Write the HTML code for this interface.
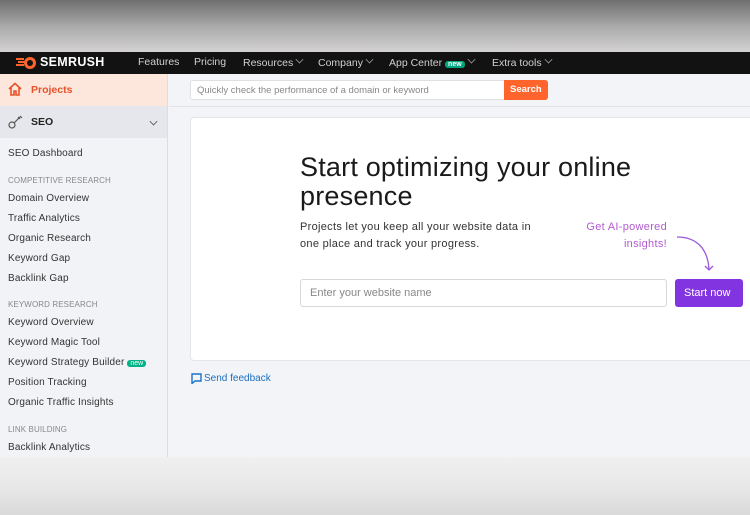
<!DOCTYPE html><html><head><style>
*{margin:0;padding:0;box-sizing:border-box}
body{width:750px;height:515px;overflow:hidden;font-family:"Liberation Sans",sans-serif;background:#f3f4f7;position:relative}
.top{position:absolute;left:0;top:0;width:750px;height:52px;background:linear-gradient(#6f6f70,#a9a9a9 50%,#d4d2d2)}
.nav{position:absolute;left:0;top:52px;width:750px;height:22px;background:#121212;color:#d0d0d0;font-size:10.5px}
.nav span{position:absolute;top:4px;white-space:nowrap}
.chev{display:inline-block;width:7px;height:7px;border-right:1px solid #999;border-bottom:1px solid #999;transform:rotate(45deg) scale(.8);margin:0 0 3px 3px}
.side{position:absolute;left:0;top:74px;width:168px;height:383px;background:#f2f3f6;border-right:1px solid #dcdde2}
.proj{height:32px;background:#fde6db;color:#e5522a;font-weight:bold;font-size:10.5px;padding:10px 0 0 31px;position:relative}
.seo{height:32px;background:#e5e7ec;font-weight:bold;font-size:10.5px;padding:10px 0 0 31px;color:#222;position:relative}
.it{position:absolute;left:8px;font-size:10px;color:#333;letter-spacing:.15px;white-space:nowrap}
.hd{position:absolute;left:8px;font-size:8px;color:#888;letter-spacing:.1px}
.bot{position:absolute;left:0;top:457px;width:750px;height:58px;background:linear-gradient(#f0f0f1,#e6e6e6 60%,#d9d9d9)}
.card{position:absolute;left:190px;top:117px;width:570px;height:244px;background:#fff;border:1px solid #e4e5ea;border-radius:4px}
</style></head><body>
<div class="top"></div>
<div class="nav">
<svg style="position:absolute;left:15px;top:4px" width="22" height="14" viewBox="0 0 22 14"><path d="M1 3h8M3 6h7M1 9h8" stroke="#ff642d" stroke-width="2"/><circle cx="15" cy="7" r="6" fill="#ff642d"/><circle cx="15" cy="7" r="3" fill="#121212"/></svg>
<span style="left:40px;top:3px;color:#fff;font-weight:bold;font-size:12.5px;letter-spacing:.3px">SEMRUSH</span>
<span style="left:138px">Features</span><span style="left:194px">Pricing</span><span style="left:243px">Resources<i class="chev"></i></span><span style="left:318px">Company<i class="chev"></i></span><span style="left:389px">App Center <b style="background:#00a67e;color:#fff;font-size:7px;padding:0 3px;border-radius:3px">new</b><i class="chev"></i></span><span style="left:492px">Extra tools<i class="chev"></i></span>
</div>
<div class="side">
<div class="proj"><svg style="position:absolute;left:8px;top:8px" width="14" height="14" viewBox="0 0 14 14"><path d="M1 7L7 1.5 13 7M3 5.5V13h3V9h2v4h3V5.5" fill="none" stroke="#e5522a" stroke-width="1.6"/></svg>Projects</div>
<div class="seo"><svg style="position:absolute;left:8px;top:9px" width="16" height="14" viewBox="0 0 16 14"><circle cx="4" cy="10" r="3" fill="none" stroke="#555" stroke-width="1.2"/><path d="M6 8l6-6M10 2l2 2M12 1l2 2" stroke="#555" stroke-width="1.2"/></svg>SEO<i class="chev" style="position:absolute;left:147px;top:12px;border-color:#555"></i></div>
<div class="it" style="top:74px">SEO Dashboard</div>
<div class="hd" style="top:102px">COMPETITIVE RESEARCH</div>
<div class="it" style="top:119px">Domain Overview</div>
<div class="it" style="top:139px">Traffic Analytics</div>
<div class="it" style="top:159px">Organic Research</div>
<div class="it" style="top:179px">Keyword Gap</div>
<div class="it" style="top:199px">Backlink Gap</div>
<div class="hd" style="top:226px">KEYWORD RESEARCH</div>
<div class="it" style="top:243px">Keyword Overview</div>
<div class="it" style="top:263px">Keyword Magic Tool</div>
<div class="it" style="top:283px">Keyword Strategy Builder <b style="background:#00b386;color:#fff;font-size:7px;padding:0 3px;border-radius:3px;font-weight:normal;letter-spacing:0">new</b></div>
<div class="it" style="top:303px">Position Tracking</div>
<div class="it" style="top:323px">Organic Traffic Insights</div>
<div class="hd" style="top:351px">LINK BUILDING</div>
<div class="it" style="top:368px">Backlink Analytics</div>
</div>
<div style="position:absolute;left:169px;top:106px;width:581px;height:1px;background:#e2e3e8"></div>
<div style="position:absolute;left:190px;top:80px;width:358px;height:20px;background:#fff;border:1px solid #e0e0e4;border-radius:3px;font-size:9.5px;color:#888;padding:4px 0 0 6px">Quickly check the performance of a domain or keyword</div>
<div style="position:absolute;left:504px;top:80px;width:44px;height:20px;background:#ff642d;border-radius:0 3px 3px 0;color:#fff;font-weight:bold;font-size:9.5px;padding:4px 0 0 6px">Search</div>
<div class="card"></div>
<div style="position:absolute;left:300px;top:153px;font-size:27px;line-height:29px;color:#1a1a1a;width:440px;letter-spacing:.2px">Start optimizing your online presence</div>
<div style="position:absolute;left:300px;top:219px;font-size:11px;line-height:16.5px;color:#333;width:240px;letter-spacing:.3px">Projects let you keep all your website data in one place and track your progress.</div>
<div style="position:absolute;left:550px;top:219px;width:117px;text-align:right;font-size:11px;line-height:16.5px;color:#b35bd0;letter-spacing:.3px">Get AI-powered insights!</div>
<svg style="position:absolute;left:674px;top:234px" width="40" height="40" viewBox="0 0 40 40"><path d="M3 3C22 3 34 14 35 36M31 32l4 4 4-4" fill="none" stroke="#9b59d8" stroke-width="1.3"/></svg>
<div style="position:absolute;left:300px;top:279px;width:367px;height:28px;border:1px solid #d8d8dc;border-radius:3px;font-size:11px;color:#888;padding:7px 0 0 9px">Enter your website name</div>
<div style="position:absolute;left:675px;top:279px;width:68px;height:28px;background:#8234e0;border-radius:3px;color:#fff;font-size:11px;padding:8px 0 0 9px">Start now</div>
<svg style="position:absolute;left:191px;top:373px" width="11" height="11" viewBox="0 0 11 11"><path d="M1 1h9v7H4l-3 2.5z" fill="none" stroke="#1a73c8" stroke-width="1.4"/></svg>
<div style="position:absolute;left:204px;top:373px;font-size:10px;color:#1a6fc0">Send feedback</div>
<div class="bot"></div>
</body></html>
